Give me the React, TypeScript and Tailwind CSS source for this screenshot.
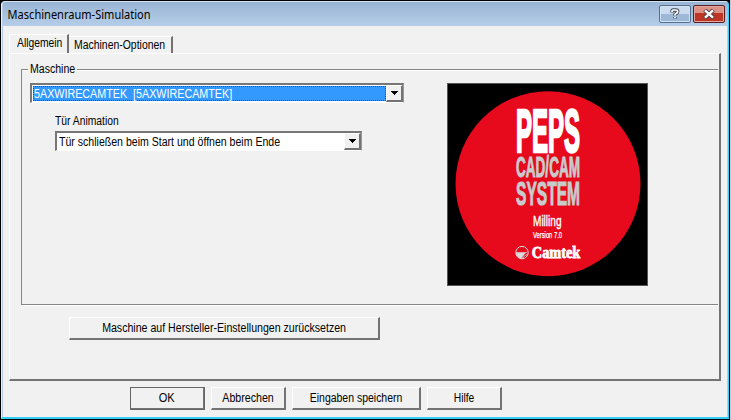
import type { ReactNode } from "react";

function Label({ children, className = "" }: { children: ReactNode; className?: string }) {
  return (
    <span className={`block w-max whitespace-pre text-[12px] leading-[14px] ${className}`}>
      {children}
    </span>
  );
}

function PushButton({ children, className = "" }: { children: ReactNode; className?: string }) {
  return (
    <button
      className={`flex h-[23px] shrink-0 items-center justify-center border-t border-r-2 border-b-2 border-l border-t-white border-r-[#737373] border-b-[#737373] border-l-white bg-[#f1f1f1] ${className}`}
    >
      {children}
    </button>
  );
}

function DropArrow() {
  return (
    <span className="flex h-[17px] w-[17px] shrink-0 items-center justify-center border-t border-r-2 border-b-2 border-l border-t-white border-r-[#737373] border-b-[#737373] border-l-white bg-[#f1f1f1]">
      <svg width="7" height="4" viewBox="0 0 7 4" shapeRendering="crispEdges">
        <path d="M0 0h7v1h-1v1h-1v1h-1v1h-1v-1h-1v-1h-1v-1h-1z" />
      </svg>
    </span>
  );
}

function ProductLogo() {
  return (
    <svg className="-mt-px" width="201" height="203" viewBox="447 83 201 203" fontFamily="Liberation Sans, sans-serif">
      <rect x="447" y="83" width="201" height="203" fill="#555" />
      <rect x="448" y="84" width="199" height="201" fill="#000" />
      <circle cx="548" cy="183.7" r="92.5" fill="#e60a1c" />
      <g fontWeight="bold" strokeLinejoin="miter">
        <text x="516" y="152.3" fontSize="61" textLength="64" lengthAdjust="spacingAndGlyphs" fill="#fff" stroke="#fff" strokeWidth="2.6">PEPS</text>
        <text x="516" y="177.4" fontSize="29" textLength="64" lengthAdjust="spacingAndGlyphs" fill="#c9cccd" stroke="#c9cccd" strokeWidth="1">CAD/CAM</text>
        <text x="516" y="204.6" fontSize="34" textLength="64" lengthAdjust="spacingAndGlyphs" fill="#c9cccd" stroke="#c9cccd" strokeWidth="1.1">SYSTEM</text>
      </g>
      <text x="533" y="225.5" fontSize="15" textLength="28.5" lengthAdjust="spacingAndGlyphs" fill="#fff" stroke="#fff" strokeWidth="0.4">Milling</text>
      <text x="533" y="237.7" fontSize="9" textLength="29" lengthAdjust="spacingAndGlyphs" fill="#fff" stroke="#fff" strokeWidth="0.25">Version 7.0</text>
      <circle cx="522" cy="252.6" r="6.2" fill="#e60a1c" stroke="#d9dadb" strokeWidth="1" />
      <path d="M516 252.3h12l-3 1.2-3.5 5.2a6.2 6.2 0 0 1-5.5-6.4z" fill="#d9dadb" />
      <path d="M522.8 258.3l2-2.6 3-1.4" fill="none" stroke="#d9dadb" strokeWidth="0.8" />
      <text x="531.8" y="258" fontSize="15.8" fontWeight="bold" fontFamily="Liberation Serif, serif" textLength="48.5" lengthAdjust="spacingAndGlyphs" fill="#fff" stroke="#fff" strokeWidth="0.8">Camtek</text>
    </svg>
  );
}

function TitleBar() {
  return (
    <header className="flex h-[24px] shrink-0 items-start rounded-t-[3px] bg-linear-to-b from-[#9ab5d4] to-[#b5cde8] pr-[3px]">
      <h1 className="w-max origin-left pt-[4px] pl-[5px] font-['Noto_Sans'] text-[12px] leading-[18px] whitespace-nowrap text-black scale-x-[0.92]">
        Maschinenraum-Simulation
      </h1>
      <div className="ml-auto flex gap-[2px] pt-[3px]">
        <button className="flex h-[18px] w-[32px] items-center justify-center rounded-[2px] border border-[#56708f] bg-linear-to-b from-[#cbdbed] from-50% to-[#9db8d6] to-50% shadow-[inset_0_0_0_1px_#d3e2f2]">
          <svg width="10" height="12" viewBox="0 0 10 12" fill="none">
            <path d="M2 4.5V3.2Q2 2 3.3 2h2.9q1.5 0 1.5 1.4T6.2 5.4L5 6.3v1.2M5 9v1.5" stroke="#3d4855" strokeWidth="3.4" />
            <path d="M2 4V3.2Q2 2 3.3 2h2.9q1.5 0 1.5 1.4T6.2 5.4L5 6.3v1.2M5 8.9v1.3" stroke="#fff" strokeWidth="1.7" />
          </svg>
        </button>
        <button className="flex h-[18px] w-[32px] items-center justify-center rounded-[2px] border border-[#571d25] bg-linear-to-b from-[#dc9186] from-45% to-[#bd3525] to-45% shadow-[inset_0_0_0_1px_#e2a69d]">
          <svg width="12" height="10" viewBox="0 0 12 10" fill="none">
            <path d="M1.6 1l8.8 8M10.4 1l-8.8 8" stroke="#504451" strokeWidth="4.2" />
            <path d="M2 1.4l8 7.2M10 1.4l-8 7.2" stroke="#fff" strokeWidth="2.3" />
          </svg>
        </button>
      </div>
    </header>
  );
}

export default function App() {
  return (
    <div className="h-[420px] w-[731px] overflow-hidden border-r border-[#b5cbe3] bg-black pt-px pr-px pb-px pl-px font-['Liberation_Sans',Arial,sans-serif] text-black">
      <div className="flex h-[418px] flex-col rounded-t-[4px] border-t border-r border-b-2 border-l border-t-[#d5e4f3] border-r-[#35cdf3] border-b-[#35cdf3] border-l-[#e8f1fa] bg-[#b5cde8] pl-px">
        <TitleBar />
        <main className="mr-px flex min-h-0 flex-1 flex-col bg-[#f1f1f1] pt-[8px] pr-[6px] pl-[6px]">
          <nav className="flex h-[19px] shrink-0 items-end">
            <div className="h-[20px] w-[60px] shrink-0 self-start border-t border-r-2 border-l border-t-white border-r-[#737373] border-l-white bg-[#f1f1f1] pt-px pl-[7px]">
              <Label className="origin-left scale-x-[0.86]">Allgemein</Label>
            </div>
            <div className="h-[17px] w-[104px] border-t border-r-2 border-t-white border-r-[#737373] pt-[1px] pl-[5px]">
              <Label className="origin-left scale-x-[0.87]">Machinen-Optionen</Label>
            </div>
          </nav>
          <section className="flex h-[328px] shrink-0 flex-col border-t border-r-2 border-b-2 border-l border-t-white border-r-[#737373] border-b-[#737373] border-l-white pt-[15px] pr-px pl-[11px]">
            <div className="h-[236px] shrink-0 border-t border-b border-l border-[#858585] shadow-[0_1px_0_#fff,inset_0_1px_0_#fff]">
              <div className="-mt-[8px] ml-[6px] h-[15px] w-[49px] bg-[#f1f1f1] pl-[2px]">
                <Label className="origin-left scale-x-[0.88]">Maschine</Label>
              </div>
              <div className="flex items-start justify-between pt-[7px] pr-[70px] pl-[8px]">
                <div className="-mt-px">
                  <div className="flex h-[20px] w-[374px] border-t-2 border-r border-b border-l-2 border-t-[#777] border-r-[#999] border-b-white border-l-[#777] bg-white">
                    <div className="m-px mr-0 flex flex-1 items-center border border-dotted border-[#7c3b00] bg-[#3399ff] text-white">
                      <Label className="origin-left scale-x-[0.895]">{"5AXWIRECAMTEK  [5AXWIRECAMTEK]"}</Label>
                    </div>
                    <DropArrow />
                  </div>
                  <div className="pt-[11px] pl-[25px]">
                    <Label className="origin-left scale-x-[0.86]">Tür Animation</Label>
                    <div className="mt-[3px] flex h-[20px] w-[307px] border-t-2 border-r border-b border-l-2 border-t-[#777] border-r-[#999] border-b-white border-l-[#777] bg-white">
                      <div className="flex flex-1 items-center pl-[2px]">
                        <Label className="origin-left scale-x-[0.88]">Tür schließen beim Start und öffnen beim Ende</Label>
                      </div>
                      <DropArrow />
                    </div>
                  </div>
                </div>
                <ProductLogo />
              </div>
            </div>
            <PushButton className="mt-[12px] ml-[48px] w-[311px]">
              <Label className="scale-x-[0.883]">Maschine auf Hersteller-Einstellungen zurücksetzen</Label>
            </PushButton>
          </section>
          <footer className="flex gap-[6px] pt-[6px] pl-[121px]">
            <PushButton className="w-[75px] outline outline-[#666] -outline-offset-1">
              <Label className="scale-x-[0.92]">OK</Label>
            </PushButton>
            <PushButton className="w-[75px]">
              <Label className="scale-x-[0.885]">Abbrechen</Label>
            </PushButton>
            <PushButton className="w-[129px]">
              <Label className="scale-x-[0.873]">Eingaben speichern</Label>
            </PushButton>
            <PushButton className="w-[75px]">
              <Label className="scale-x-[0.86]">Hilfe</Label>
            </PushButton>
          </footer>
        </main>
      </div>
    </div>
  );
}
